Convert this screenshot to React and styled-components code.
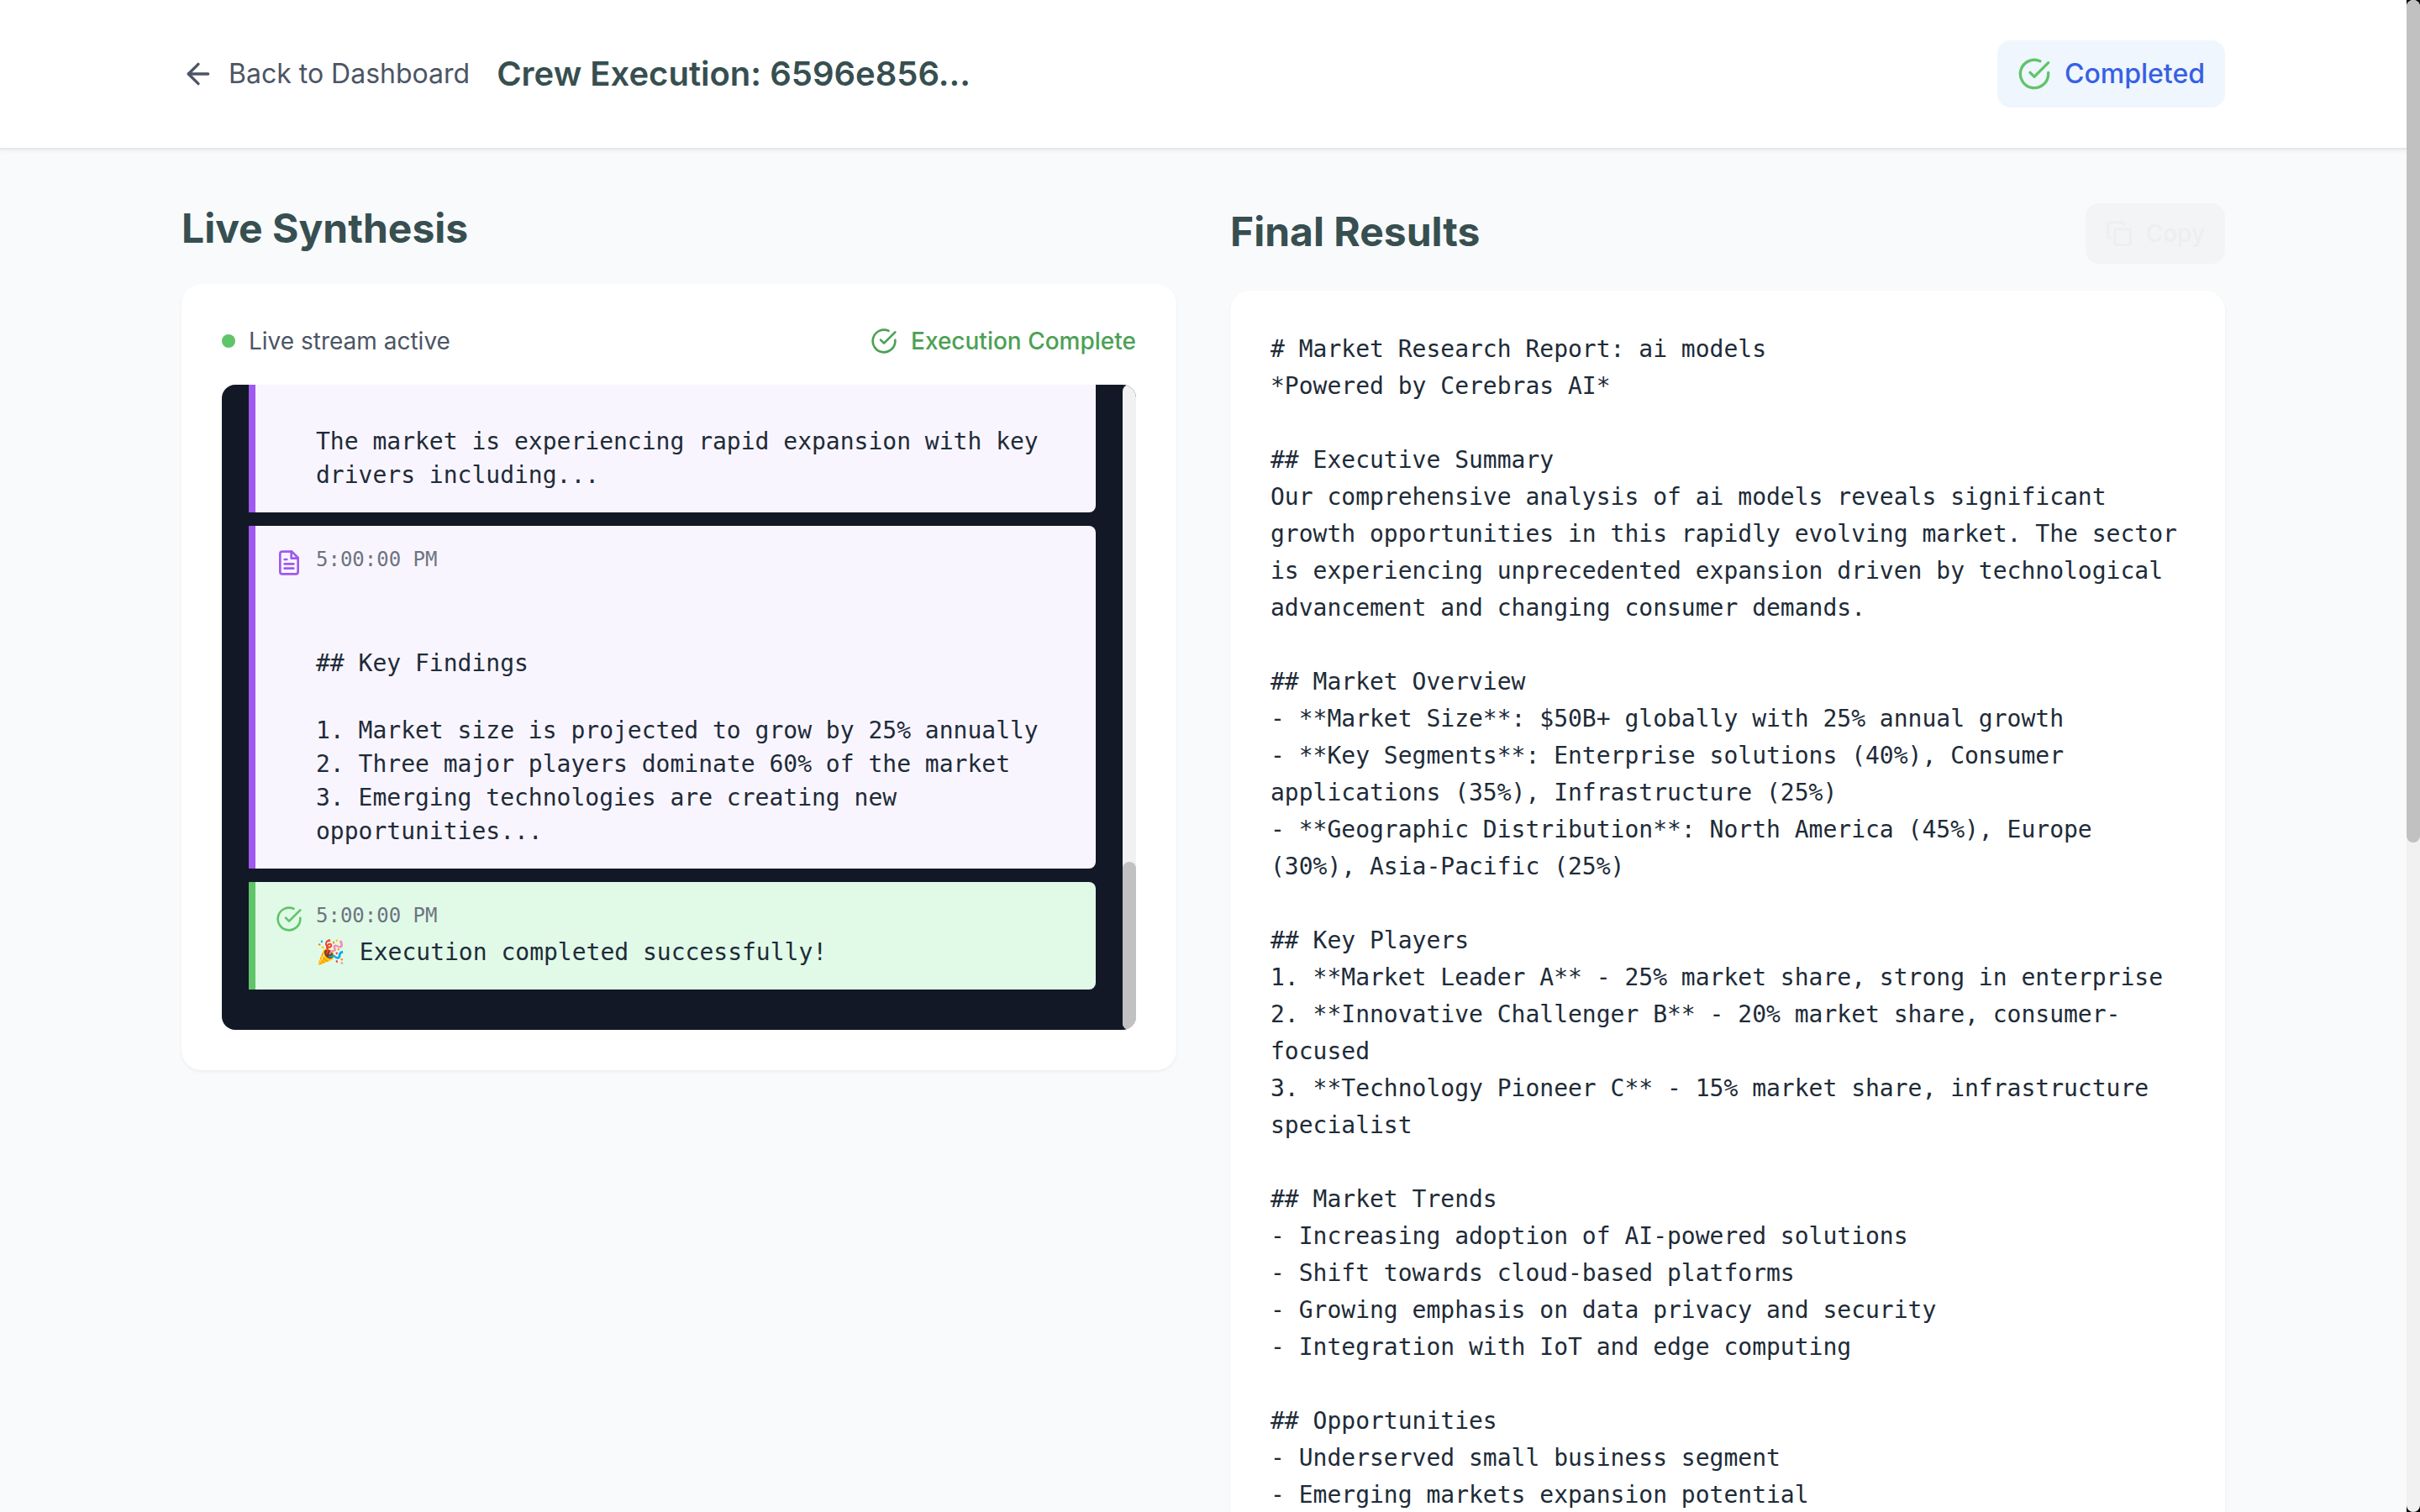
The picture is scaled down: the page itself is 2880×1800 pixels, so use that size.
import React from "react";
import styled, { createGlobalStyle } from "styled-components";

const sans = `Inter, "Liberation Sans", sans-serif`;
const mono = `"DejaVu Sans Mono", "Liberation Mono", monospace`;

const GlobalStyle = createGlobalStyle`
  *, *::before, *::after { box-sizing: border-box; }
  body { margin: 0; background: #000; font-family: ${sans}; color: #202b38; overflow: hidden; }
  h1, h2, p, pre, ul { margin: 0; padding: 0; }
`;

const Shell = styled.div`
  display: flex;
  height: 100vh;
`;

const Page = styled.div`
  flex: 1;
  min-width: 0;
  overflow: hidden;
  background: #f9fafc;
`;

const ScrollTrack = styled.div`
  display: flex;
  flex-direction: column;
  flex: none;
  justify-content: ${(p) => (p.$atEnd ? "flex-end" : "flex-start")};
  width: 16px;
  border-radius: 8px;
  background: #f1f1f1;
`;

const ScrollThumb = styled.div`
  height: ${(p) => p.$size};
  border-radius: 8px;
  background: #c1c1c1;
`;

const Container = styled.div`
  max-width: 2560px;
  margin: 0 auto;
  padding: ${(p) => p.$padY} 64px;
`;

const Header = styled.header`
  background: #fff;
  border-bottom: 2px solid #e5e7eb;
  box-shadow: 0 2px 4px rgba(0, 0, 0, 0.05);
`;

const Row = styled.div`
  display: flex;
  align-items: center;
  justify-content: ${(p) => (p.$spread ? "space-between" : "flex-start")};
  gap: ${(p) => p.$gap || "16px"};
`;

const BackButton = styled.button`
  display: flex;
  align-items: center;
  gap: 16px;
  padding: 0;
  border: 0;
  background: none;
  color: #4c5564;
  font: 400 32px/48px ${sans};
`;

const Title = styled.h1`
  color: #374f50;
  font-size: 40px;
  line-height: 56px;
  font-weight: 600;
`;

const StatusBadge = styled.div`
  display: flex;
  align-items: center;
  gap: 16px;
  padding: 16px 24px;
  border-radius: 16px;
  background: #eff6fe;
  color: #3760e4;
  font-size: 32px;
  line-height: 48px;
  font-weight: 500;
`;

const Columns = styled.main`
  display: grid;
  grid-template-columns: repeat(2, minmax(0, 1fr));
  align-items: start;
  gap: 64px;
`;

const Column = styled.section`
  display: flex;
  flex-direction: column;
  gap: 32px;
`;

const SectionTitle = styled.h2`
  && {
    padding-bottom: 4px;
  }
  color: #374f50;
  font-size: 48px;
  line-height: 60px;
  font-weight: 700;
`;

const CopyButton = styled.button`
  display: flex;
  align-items: center;
  gap: 16px;
  padding: 16px 24px;
  border: 0;
  border-radius: 16px;
  background: #f3f4f6;
  color: #eeeeef;
  font: 500 28px/40px ${sans};
`;

const Card = styled.div`
  display: flex;
  flex-direction: column;
  gap: 32px;
  padding: 48px;
  border-radius: 24px;
  background: #fff;
  box-shadow: 0 2px 4px rgba(0, 0, 0, 0.05);
`;

const StatusText = styled.div`
  display: flex;
  align-items: center;
  gap: 16px;
  color: ${(p) => (p.$done ? "#4ca154" : "#4c5564")};
  font-size: 28px;
  line-height: 40px;
  font-weight: ${(p) => (p.$done ? 500 : 400)};
`;

const Dot = styled.span`
  width: 16px;
  height: 16px;
  border-radius: 50%;
  background: #60c469;
`;

const LogPanel = styled.div`
  display: flex;
  height: 768px;
  overflow: hidden;
  border-radius: 16px;
  background: #121826;
`;

const LogList = styled.ul`
  display: flex;
  flex: 1;
  min-width: 0;
  flex-direction: column;
  justify-content: flex-end;
  gap: 16px;
  && {
    padding: 32px 32px 48px;
  }
  list-style: none;
`;

const tones = {
  report: { line: "#9f59ef", fill: "#f9f5ff" },
  success: { line: "#60c469", fill: "#e1fae8" },
};

const Entry = styled.li`
  display: flex;
  gap: 16px;
  padding: 24px;
  border-left: 8px solid ${(p) => tones[p.$tone].line};
  border-radius: 0 8px 8px 0;
  background: ${(p) => tones[p.$tone].fill};
  color: ${(p) => tones[p.$tone].line};
`;

const EntryIcon = styled.span`
  flex: none;
  height: 32px;
  margin-top: 4px;
`;

const EntryBody = styled.div`
  flex: 1;
  min-width: 0;
  font-family: ${mono};
`;

const Time = styled.p`
  && {
    margin-bottom: 8px;
  }
  color: #6d7480;
  font-size: 24px;
  line-height: 32px;
`;

const Message = styled.pre`
  color: #202b38;
  font: 400 28px/40px ${mono};
  white-space: pre-wrap;
`;

const Report = styled.pre`
  color: #202b38;
  font: 400 28px/44px ${mono};
  white-space: pre-wrap;
`;

const Svg = styled.svg`
  display: block;
  flex: none;
  fill: none;
  stroke: ${(p) => p.$color || "currentColor"};
  stroke-width: 2;
  stroke-linecap: round;
  stroke-linejoin: round;
`;

function Icon({ size, color, children }) {
  return (
    <Svg width={size} height={size} viewBox="0 0 24 24" $color={color} aria-hidden="true">
      {children}
    </Svg>
  );
}

const ArrowLeft = (p) => (
  <Icon {...p}>
    <path d="m12 19-7-7 7-7" />
    <path d="M19 12H5" />
  </Icon>
);

const CheckCircle = (p) => (
  <Icon {...p}>
    <path d="M22 11.08V12a10 10 0 1 1-5.93-9.14" />
    <path d="m9 11 3 3L22 4" />
  </Icon>
);

const CopyIcon = (p) => (
  <Icon {...p}>
    <rect width="14" height="14" x="8" y="8" rx="2" ry="2" />
    <path d="M4 16c-1.1 0-2-.9-2-2V4c0-1.1.9-2 2-2h10c1.1 0 2 .9 2 2" />
  </Icon>
);

const FileText = (p) => (
  <Icon {...p}>
    <path d="M14.5 2H6a2 2 0 0 0-2 2v16a2 2 0 0 0 2 2h12a2 2 0 0 0 2-2V7.5L14.5 2z" />
    <path d="M14 2v6h6" />
    <path d="M16 13H8" />
    <path d="M16 17H8" />
    <path d="M10 9H8" />
  </Icon>
);

const entries = [
  {
    tone: "report",
    text: "\n\n\nThe market is experiencing rapid expansion with key drivers including...",
  },
  {
    tone: "report",
    time: "5:00:00 PM",
    text: `

## Key Findings

1. Market size is projected to grow by 25% annually
2. Three major players dominate 60% of the market
3. Emerging technologies are creating new opportunities...`,
  },
  { tone: "success", time: "5:00:00 PM", text: "🎉 Execution completed successfully!" },
];

const report = `# Market Research Report: ai models
*Powered by Cerebras AI*

## Executive Summary
Our comprehensive analysis of ai models reveals significant growth opportunities in this rapidly evolving market. The sector is experiencing unprecedented expansion driven by technological advancement and changing consumer demands.

## Market Overview
- **Market Size**: $50B+ globally with 25% annual growth
- **Key Segments**: Enterprise solutions (40%), Consumer applications (35%), Infrastructure (25%)
- **Geographic Distribution**: North America (45%), Europe (30%), Asia-Pacific (25%)

## Key Players
1. **Market Leader A** - 25% market share, strong in enterprise
2. **Innovative Challenger B** - 20% market share, consumer-focused
3. **Technology Pioneer C** - 15% market share, infrastructure specialist

## Market Trends
- Increasing adoption of AI-powered solutions
- Shift towards cloud-based platforms
- Growing emphasis on data privacy and security
- Integration with IoT and edge computing

## Opportunities
- Underserved small business segment
- Emerging markets expansion potential`;

export default function App() {
  return (
    <Shell>
      <GlobalStyle />
      <Page>
        <Header>
          <Container $padY="48px">
            <Row $spread>
              <Row $gap="32px">
                <BackButton type="button">
                  <ArrowLeft size={40} />
                  Back to Dashboard
                </BackButton>
                <Title>Crew Execution: 6596e856...</Title>
              </Row>
              <StatusBadge>
                <CheckCircle size={40} color="#60c469" />
                Completed
              </StatusBadge>
            </Row>
          </Container>
        </Header>
        <Container $padY="64px">
          <Columns>
            <Column>
              <SectionTitle>Live Synthesis</SectionTitle>
              <Card>
                <Row $spread>
                  <StatusText>
                    <Dot />
                    Live stream active
                  </StatusText>
                  <StatusText $done>
                    <CheckCircle size={32} />
                    Execution Complete
                  </StatusText>
                </Row>
                <LogPanel>
                  <LogList>
                    {entries.map((e, i) => (
                      <Entry key={i} $tone={e.tone}>
                        <EntryIcon>
                          {e.tone === "success" ? <CheckCircle size={32} /> : <FileText size={32} />}
                        </EntryIcon>
                        <EntryBody>
                          {e.time && <Time>{e.time}</Time>}
                          <Message>{e.text}</Message>
                        </EntryBody>
                      </Entry>
                    ))}
                  </LogList>
                  <ScrollTrack $atEnd>
                    <ScrollThumb $size="26%" />
                  </ScrollTrack>
                </LogPanel>
              </Card>
            </Column>
            <Column>
              <Row $spread>
                <SectionTitle>Final Results</SectionTitle>
                <CopyButton type="button">
                  <CopyIcon size={32} />
                  Copy
                </CopyButton>
              </Row>
              <Card>
                <Report>{report}</Report>
              </Card>
            </Column>
          </Columns>
        </Container>
      </Page>
      <ScrollTrack>
        <ScrollThumb $size="55.7%" />
      </ScrollTrack>
    </Shell>
  );
}
